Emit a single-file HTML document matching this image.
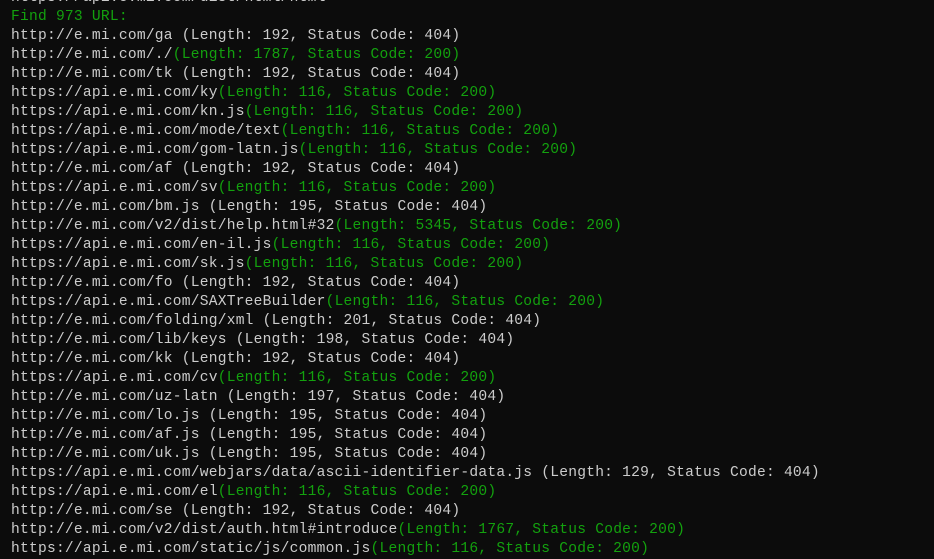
<!DOCTYPE html>
<html><head><meta charset="utf-8"><style>
html,body{margin:0;padding:0;background:#0c0c0c;width:934px;height:542px;overflow:hidden}
pre{margin:0;position:absolute;left:11px;top:-11px;font-family:"Liberation Mono","DejaVu Sans Mono",monospace;font-size:14.6px;letter-spacing:0.23px;line-height:19px;color:#cccccc;white-space:pre}
.g{color:#13a10e}
</style></head><body><pre>https://api.e.mi.com/dist/html/html
<span class="g">Find 973 URL:</span>
http://e.mi.com/ga (Length: 192, Status Code: 404)
http://e.mi.com/./<span class="g">(Length: 1787, Status Code: 200)</span>
http://e.mi.com/tk (Length: 192, Status Code: 404)
https://api.e.mi.com/ky<span class="g">(Length: 116, Status Code: 200)</span>
https://api.e.mi.com/kn.js<span class="g">(Length: 116, Status Code: 200)</span>
https://api.e.mi.com/mode/text<span class="g">(Length: 116, Status Code: 200)</span>
https://api.e.mi.com/gom-latn.js<span class="g">(Length: 116, Status Code: 200)</span>
http://e.mi.com/af (Length: 192, Status Code: 404)
https://api.e.mi.com/sv<span class="g">(Length: 116, Status Code: 200)</span>
http://e.mi.com/bm.js (Length: 195, Status Code: 404)
http://e.mi.com/v2/dist/help.html#32<span class="g">(Length: 5345, Status Code: 200)</span>
https://api.e.mi.com/en-il.js<span class="g">(Length: 116, Status Code: 200)</span>
https://api.e.mi.com/sk.js<span class="g">(Length: 116, Status Code: 200)</span>
http://e.mi.com/fo (Length: 192, Status Code: 404)
https://api.e.mi.com/SAXTreeBuilder<span class="g">(Length: 116, Status Code: 200)</span>
http://e.mi.com/folding/xml (Length: 201, Status Code: 404)
http://e.mi.com/lib/keys (Length: 198, Status Code: 404)
http://e.mi.com/kk (Length: 192, Status Code: 404)
https://api.e.mi.com/cv<span class="g">(Length: 116, Status Code: 200)</span>
http://e.mi.com/uz-latn (Length: 197, Status Code: 404)
http://e.mi.com/lo.js (Length: 195, Status Code: 404)
http://e.mi.com/af.js (Length: 195, Status Code: 404)
http://e.mi.com/uk.js (Length: 195, Status Code: 404)
https://api.e.mi.com/webjars/data/ascii-identifier-data.js (Length: 129, Status Code: 404)
https://api.e.mi.com/el<span class="g">(Length: 116, Status Code: 200)</span>
http://e.mi.com/se (Length: 192, Status Code: 404)
http://e.mi.com/v2/dist/auth.html#introduce<span class="g">(Length: 1767, Status Code: 200)</span>
https://api.e.mi.com/static/js/common.js<span class="g">(Length: 116, Status Code: 200)</span>
</pre></body></html>
